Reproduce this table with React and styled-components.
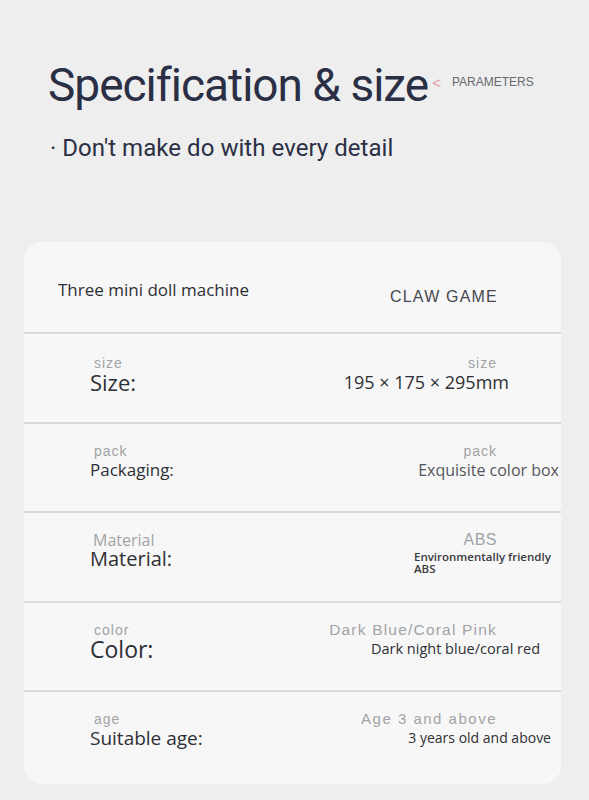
import styled, { createGlobalStyle } from "styled-components";

const GlobalStyle = createGlobalStyle`
  body {
    margin: 0;
    background: #eeeeee;
    font-family: "Open Sans", "Noto Sans", sans-serif;
  }
`;

const Page = styled.div`
  width: 589px;
  height: 800px;
  box-sizing: border-box;
  padding: 57px 28px 0 24px;
  background: #eeeeee;
  overflow: hidden;
`;

const Header = styled.header`
  padding-left: 24px;
`;

const TitleRow = styled.div`
  display: flex;
  align-items: center;
  gap: 4px;
`;

const Title = styled.h1`
  margin: 0;
  font-family: Roboto, sans-serif;
  font-weight: 400;
  font-size: 46px;
  line-height: 56px;
  letter-spacing: -1px;
  color: #2a2f45;
`;

const Tag = styled.div`
  display: flex;
  align-items: center;
  gap: 11px;
  margin-bottom: 6px;
  font-family: "Liberation Sans", Arial, sans-serif;
  font-size: 12px;
  color: #666a70;
`;

const Chevron = styled.span`
  color: #e79aa4;
  font-size: 15px;
  font-weight: 300;
`;

const Subtitle = styled.p`
  margin: 20px 0 0 2px;
  font-family: Roboto, sans-serif;
  font-size: 24px;
  line-height: 30px;
  letter-spacing: 0.05px;
  color: #2a2f45;
`;

const Card = styled.section`
  margin-top: 79px;
  width: 537px;
  background: #f7f7f7;
  border-radius: 18px;
  overflow: hidden;
`;

const Row = styled.div`
  display: grid;
  grid-template-columns: 1fr auto;
  align-items: start;
  height: ${(p) => p.$height || 89}px;
  box-sizing: border-box;
  padding-top: ${(p) => p.$top || 19}px;
  border-bottom: ${(p) => (p.$last ? "none" : "2px solid #d9dadd")};
`;

const Product = styled.div`
  padding-left: 34px;
  font-size: 17px;
  line-height: 24px;
  color: #2e2f35;
`;

const Brand = styled.div`
  margin: 7px 63px 0 0;
  font-family: "Liberation Sans", Arial, sans-serif;
  font-size: 16px;
  line-height: 24px;
  letter-spacing: 1.2px;
  color: #45474d;
`;

const Left = styled.div`
  padding-left: 66px;
  display: flex;
  flex-direction: column;
`;

const Hint = styled.span`
  padding-left: ${(p) => p.$indent ?? 4}px;
  font-family: ${(p) =>
    p.$humanist ? `"Open Sans", sans-serif` : `"Liberation Sans", Arial, sans-serif`};
  font-size: ${(p) => p.$size || 14}px;
  line-height: 16px;
  letter-spacing: ${(p) => p.$spacing ?? 1}px;
  color: #a2a3a6;
`;

const Label = styled.span`
  margin-top: 1px;
  font-size: ${(p) => p.$size}px;
  line-height: 20px;
  color: #2e2f35;
`;

const Right = styled.div`
  display: flex;
  flex-direction: column;
  align-items: flex-end;
`;

const RightHint = styled(Hint)`
  padding-left: 0;
  margin-right: 64px;
`;

const Value = styled.span`
  margin: 1px ${(p) => p.$right}px 0 0;
  font-size: ${(p) => p.$size || 16}px;
  line-height: 20px;
  color: ${(p) => p.$color || "#2e2f35"};
`;

const SmallNote = styled.span`
  margin: 3px ${(p) => p.$right}px 0 0;
  width: 137px;
  font-size: 11.5px;
  font-weight: 600;
  line-height: 11.5px;
  color: #3a3b40;
`;

export default function App() {
  return (
    <Page>
      <GlobalStyle />
      <Header>
        <TitleRow>
          <Title>Specification &amp; size</Title>
          <Tag>
            <Chevron>&lt;</Chevron>
            PARAMETERS
          </Tag>
        </TitleRow>
        <Subtitle>· Don't make do with every detail</Subtitle>
      </Header>

      <Card>
        <Row $height={92} $top={36}>
          <Product>Three mini doll machine</Product>
          <Brand>CLAW GAME</Brand>
        </Row>

        <Row $height={90} $top={21}>
          <Left>
            <Hint>size</Hint>
            <Label $size={22}>Size:</Label>
          </Left>
          <Right>
            <RightHint>size</RightHint>
            <Value $right={52} $size={18}>195 × 175 × 295mm</Value>
          </Right>
        </Row>

        <Row $height={89}>
          <Left>
            <Hint>pack</Hint>
            <Label $size={17}>Packaging:</Label>
          </Left>
          <Right>
            <RightHint>pack</RightHint>
            <Value $right={2} $size={16} $color="#55565b">
              Exquisite color box
            </Value>
          </Right>
        </Row>

        <Row $height={90}>
          <Left>
            <Hint $humanist $spacing={0} $indent={3} $size={16}>
              Material
            </Hint>
            <Label $size={20}>Material:</Label>
          </Left>
          <Right>
            <RightHint $size={16} $spacing={0.5}>ABS</RightHint>
            <SmallNote $right={10}>
              Environmentally friendly
              <br />
              ABS
            </SmallNote>
          </Right>
        </Row>

        <Row $height={89}>
          <Left>
            <Hint>color</Hint>
            <Label $size={23}>Color:</Label>
          </Left>
          <Right>
            <RightHint $size={15.5} $spacing={1.2}>Dark Blue/Coral Pink</RightHint>
            <Value $right={21} $size={14.5}>Dark night blue/coral red</Value>
          </Right>
        </Row>

        <Row $height={92} $last>
          <Left>
            <Hint>age</Hint>
            <Label $size={19}>Suitable age:</Label>
          </Left>
          <Right>
            <RightHint $size={15} $spacing={1.5}>Age 3 and above</RightHint>
            <Value $right={10} $size={14}>3 years old and above</Value>
          </Right>
        </Row>
      </Card>
    </Page>
  );
}
